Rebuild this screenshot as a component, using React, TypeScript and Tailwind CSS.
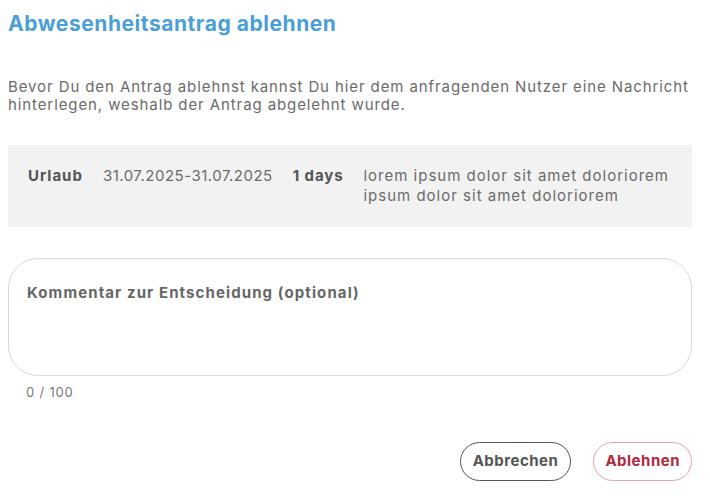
export default function App() {
  return (
    <div
      className="w-[710px] h-[500px] bg-white overflow-hidden px-2 pt-[10px]"
      style={{ fontFamily: 'Inter, "Noto Sans", sans-serif' }}
    >
      <h1 className="text-[21px] leading-[28px] font-bold text-[#4a9fd6] tracking-[0.55px]">
        Abwesenheitsantrag ablehnen
      </h1>

      <p className="mt-[40px] text-[15px] leading-[18px] text-[#6b6b6b] tracking-[0.9px]">
        Bevor Du den Antrag ablehnst kannst Du hier dem anfragenden Nutzer eine Nachricht
        hinterlegen, weshalb der Antrag abgelehnt wurde.
      </p>

      <div className="mt-[31px] w-[684px] h-[82px] bg-[#f2f2f2] flex items-start gap-5 pl-5 pt-[21px] text-[15px] leading-5 text-[#6b6b6b]">
        <span className="shrink-0 whitespace-nowrap font-bold text-[#555] tracking-[1px]">Urlaub</span>
        <span className="shrink-0 whitespace-nowrap tracking-[0.5px]">31.07.2025-31.07.2025</span>
        <span className="shrink-0 whitespace-nowrap font-bold text-[#555] tracking-[0.9px]">1 days</span>
        <span className="shrink-0 w-[318px] tracking-[1px]">
          lorem ipsum dolor sit amet doloriorem ipsum dolor sit amet doloriorem
        </span>
      </div>

      <div className="mt-[31px] w-[684px] h-[118px] rounded-[30px] border border-[#d9d9d9] px-[18px] pt-[21px]">
        <span className="text-[15px] leading-5 font-bold text-[#666] tracking-[1.1px]">
          Kommentar zur Entscheidung (optional)
        </span>
      </div>

      <div className="mt-[6px] pl-[18px] text-[13px] leading-5 text-[#777] tracking-[0.8px]">0 / 100</div>

      <div className="mt-[40px] w-[684px] flex justify-end gap-[22px]">
        <button className="h-[39px] px-[12px] rounded-full border border-[#555] text-[15px] font-bold text-[#555] bg-white tracking-[0.5px]">
          Abbrechen
        </button>
        <button className="h-[39px] px-[11px] rounded-full border border-[#dca7ad] text-[15px] font-bold text-[#b3283b] bg-white tracking-[0.5px]">
          Ablehnen
        </button>
      </div>
    </div>
  )
}
